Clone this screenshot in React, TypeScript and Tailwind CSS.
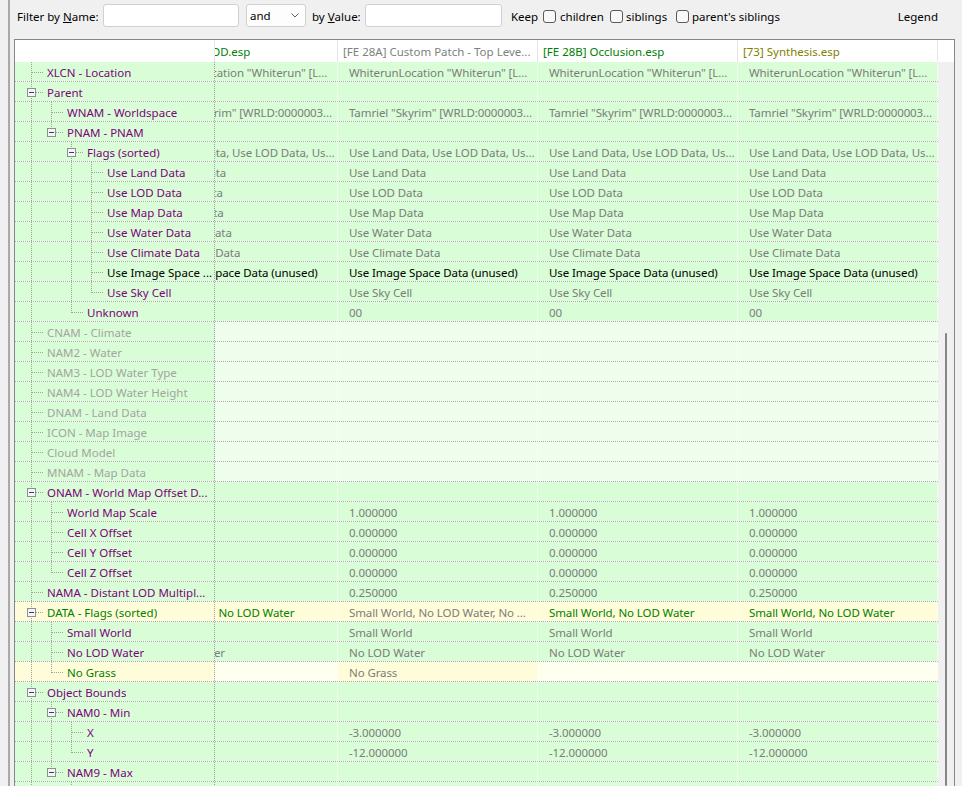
import React from "react";

type Bg = "g" | "gl" | "y" | "yl";
type Tc = "p" | "s" | "n" | "k" | "v";

const BG: Record<Bg, string> = {
  g: "bg-[#d9fdd6]",
  gl: "bg-[#eefdec]",
  y: "bg-[#fffdd9]",
  yl: "bg-[#fffff0]",
};
const TC: Record<Tc, string> = {
  p: "text-[#800080]",
  s: "text-[#a4a4a4]",
  n: "text-[#008000]",
  k: "text-black",
  v: "text-[#7c7c7c]",
};

interface Row {
  label: string;
  level: number;
  box?: boolean;
  last?: boolean;
  anc: number[];
  lc?: Tc;
  tbg?: Bg;
  v?: string[];
  vc?: Tc[];
  vbg?: Bg[];
}

const WL = 'WhiterunLocation "Whiterun" [L...';
const TS = 'Tamriel "Skyrim" [WRLD:0000003...';
const FL = "Use Land Data, Use LOD Data, Us...";
const SNL = "Small World, No LOD Water";
const all = (s: string) => [s, s, s, s];
const GL: Bg[] = ["gl", "gl", "gl", "gl"];

const rows: Row[] = [
  { label: "XLCN - Location", level: 1, anc: [], v: all(WL) },
  { label: "Parent", level: 1, box: true, anc: [] },
  { label: "WNAM - Worldspace", level: 2, anc: [1], v: all(TS) },
  { label: "PNAM - PNAM", level: 2, box: true, last: true, anc: [1] },
  { label: "Flags (sorted)", level: 3, box: true, anc: [1], v: all(FL) },
  { label: "Use Land Data", level: 4, anc: [1, 3], v: all("Use Land Data") },
  { label: "Use LOD Data", level: 4, anc: [1, 3], v: all("Use LOD Data") },
  { label: "Use Map Data", level: 4, anc: [1, 3], v: all("Use Map Data") },
  { label: "Use Water Data", level: 4, anc: [1, 3], v: all("Use Water Data") },
  { label: "Use Climate Data", level: 4, anc: [1, 3], v: all("Use Climate Data") },
  {
    label: "Use Image Space ...",
    level: 4,
    anc: [1, 3],
    lc: "k",
    v: all("Use Image Space Data (unused)"),
    vc: ["k", "k", "k", "k"],
  },
  { label: "Use Sky Cell", level: 4, last: true, anc: [1, 3], v: all("Use Sky Cell") },
  { label: "Unknown", level: 3, last: true, anc: [1], v: ["", "00", "00", "00"] },
  { label: "CNAM - Climate", level: 1, anc: [], lc: "s", vbg: GL },
  { label: "NAM2 - Water", level: 1, anc: [], lc: "s", vbg: GL },
  { label: "NAM3 - LOD Water Type", level: 1, anc: [], lc: "s", vbg: GL },
  { label: "NAM4 - LOD Water Height", level: 1, anc: [], lc: "s", vbg: GL },
  { label: "DNAM - Land Data", level: 1, anc: [], lc: "s", vbg: GL },
  { label: "ICON - Map Image", level: 1, anc: [], lc: "s", vbg: GL },
  { label: "Cloud Model", level: 1, anc: [], lc: "s", vbg: GL },
  { label: "MNAM - Map Data", level: 1, anc: [], lc: "s", vbg: GL },
  { label: "ONAM - World Map Offset D...", level: 1, box: true, anc: [] },
  { label: "World Map Scale", level: 2, anc: [1], v: ["", "1.000000", "1.000000", "1.000000"] },
  { label: "Cell X Offset", level: 2, anc: [1], v: ["", "0.000000", "0.000000", "0.000000"] },
  { label: "Cell Y Offset", level: 2, anc: [1], v: ["", "0.000000", "0.000000", "0.000000"] },
  { label: "Cell Z Offset", level: 2, last: true, anc: [1], v: ["", "0.000000", "0.000000", "0.000000"] },
  { label: "NAMA - Distant LOD Multipl...", level: 1, anc: [], v: ["", "0.250000", "0.250000", "0.250000"] },
  {
    label: "DATA - Flags (sorted)",
    level: 1,
    box: true,
    anc: [],
    lc: "n",
    tbg: "y",
    v: [SNL, "Small World, No LOD Water, No ...", SNL, SNL],
    vc: ["n", "v", "n", "n"],
    vbg: ["y", "y", "y", "y"],
  },
  { label: "Small World", level: 2, anc: [1], v: ["", "Small World", "Small World", "Small World"] },
  { label: "No LOD Water", level: 2, anc: [1], v: all("No LOD Water") },
  {
    label: "No Grass",
    level: 2,
    last: true,
    anc: [1],
    lc: "n",
    tbg: "y",
    v: ["", "No Grass", "", ""],
    vbg: ["yl", "y", "yl", "yl"],
  },
  { label: "Object Bounds", level: 1, box: true, anc: [] },
  { label: "NAM0 - Min", level: 2, box: true, anc: [1] },
  { label: "X", level: 3, anc: [1, 2], v: ["", "-3.000000", "-3.000000", "-3.000000"] },
  { label: "Y", level: 3, last: true, anc: [1, 2], v: ["", "-12.000000", "-12.000000", "-12.000000"] },
  { label: "NAM9 - Max", level: 2, box: true, last: true, anc: [1] },
  { label: "X", level: 3, anc: [1], v: ["", "", "", ""] },
];

const gx = (lv: number) => 16 + 20 * (lv - 1);

function Guides({ r }: { r: Row }) {
  const w = 32 + 20 * (r.level - 1);
  const xl = gx(r.level);
  return (
    <svg width={w} height={19} className="block shrink-0">
      {r.anc.map((a) => (
        <line
          key={a}
          x1={gx(a) + 0.5}
          y1={0}
          x2={gx(a) + 0.5}
          y2={19}
          stroke="#a0a0a0"
          strokeDasharray="1 1"
        />
      ))}
      <line
        x1={xl + 0.5}
        y1={0}
        x2={xl + 0.5}
        y2={r.last ? 11 : 19}
        stroke="#a0a0a0"
        strokeDasharray="1 1"
      />
      <line
        x1={r.box ? xl + 5 : xl + 1}
        y1={10.5}
        x2={xl + 13}
        y2={10.5}
        stroke="#a0a0a0"
        strokeDasharray="1 1"
      />
      {r.box && (
        <g>
          <rect x={xl - 3.5} y={6.5} width={8} height={8} fill="#f5f5f5" stroke="#8f8f8f" />
          <line x1={xl - 2} y1={10.5} x2={xl + 3} y2={10.5} stroke="#23407c" />
        </g>
      )}
    </svg>
  );
}

function GridRow({ r }: { r: Row }) {
  const v = r.v ?? ["", "", "", ""];
  const vc = r.vc ?? ["v", "v", "v", "v"];
  const vbg = r.vbg ?? ["g", "g", "g", "g"];
  return (
    <div className="flex h-[20px] bg-white border-b border-dotted border-[#a8a8a8]">
      <div
        className={`flex w-[200px] h-[19px] shrink-0 overflow-hidden border-r border-dotted border-[#a0a0a0] ${BG[r.tbg ?? "g"]}`}
      >
        <Guides r={r} />
        <span className={`whitespace-nowrap overflow-hidden leading-[19px] pt-[1px] ${TC[r.lc ?? "p"]}`}>
          {r.label}
        </span>
      </div>
      <div className={`w-[123px] h-[19px] shrink-0 overflow-hidden border-r border-dotted border-white ${BG[vbg[0]]}`}>
        <div
          className={`ml-[-77px] w-[200px] pl-[11px] pt-[1px] whitespace-nowrap leading-[19px] tracking-[-0.1px] ${TC[vc[0]]}`}
        >
          {v[0]}
        </div>
      </div>
      {[1, 2, 3].map((i) => (
        <div
          key={i}
          className={`w-[200px] h-[19px] shrink-0 overflow-hidden whitespace-nowrap pl-[11px] pt-[1px] leading-[19px] tracking-[-0.1px] border-r border-dotted border-white ${BG[vbg[i]]} ${TC[vc[i]]}`}
        >
          {v[i]}
        </div>
      ))}
    </div>
  );
}

function CheckBox() {
  return <div className="w-[13px] h-[13px] rounded-[3px] border border-[#5b5b5b] bg-[#f8f8f8] shrink-0" />;
}

export default function App() {
  return (
    <div className="w-[962px] h-[786px] flex overflow-hidden bg-[#f0f0f0] text-[11.5px] text-black font-['Noto_Sans',sans-serif]">
      <div className="w-[10px] h-full flex shrink-0">
        <div className="w-[8px] h-full bg-[#f0f0f0]" />
        <div className="w-[2px] h-full bg-[#a9a9a9]" />
      </div>
      <div className="flex-1 min-w-0 flex flex-col">
        <div className="h-[39px] shrink-0 flex items-start pt-[4px] pl-[7px] pr-[24px]">
          <span className="w-[80px] h-[23px] pt-[2px] flex items-center whitespace-nowrap">
            Filter by&nbsp;<span className="underline">N</span>ame:
          </span>
          <div className="ml-[6px] w-[136px] h-[23px] rounded-[3px] border border-[#d0d0d0] bg-white" />
          <div className="ml-[7px] w-[60px] h-[23px] rounded-[3px] border border-[#d0d0d0] bg-[#fdfdfd] flex items-center pl-[3px]">
            <span className="pt-[1px]">and</span>
            <svg width="8" height="5" className="ml-auto mr-[6px]">
              <polyline points="0.5,0.5 4,4 7.5,0.5" fill="none" stroke="#606060" strokeWidth="1" />
            </svg>
          </div>
          <span className="ml-[6px] w-[47px] h-[23px] pt-[2px] flex items-center whitespace-nowrap">
            by&nbsp;<span className="underline">V</span>alue:
          </span>
          <div className="ml-[6px] w-[137px] h-[23px] rounded-[3px] border border-[#d0d0d0] bg-white" />
          <span className="ml-[9px] w-[27px] h-[23px] pt-[2px] flex items-center">Keep</span>
          <div className="ml-[5px] h-[23px] pt-[2px] flex items-center">
            <CheckBox />
          </div>
          <span className="ml-[4px] w-[42px] h-[23px] pt-[2px] flex items-center">children</span>
          <div className="ml-[8px] h-[23px] pt-[2px] flex items-center">
            <CheckBox />
          </div>
          <span className="ml-[3px] w-[40px] h-[23px] pt-[2px] flex items-center">siblings</span>
          <div className="ml-[10px] h-[23px] pt-[2px] flex items-center">
            <CheckBox />
          </div>
          <span className="ml-[3px] h-[23px] pt-[2px] flex items-center whitespace-nowrap">parent's siblings</span>
          <span className="ml-auto h-[23px] pt-[2px] flex items-center">Legend</span>
        </div>
        <div className="ml-[4px] w-[941px] flex-1 min-h-0 flex flex-col overflow-hidden bg-white border-t border-l border-r border-[#828790]">
          <div className="flex h-[22px] shrink-0 bg-white leading-[22px] whitespace-nowrap">
            <div className="w-[200px] shrink-0 border-r border-[#e5e5e5]" />
            <div className="w-[123px] shrink-0 overflow-hidden border-r border-[#e5e5e5]">
              <div className="ml-[-77px] w-[200px] pl-[5px] pt-[1px] text-[#008000]">[72] DynDOLOD.esp</div>
            </div>
            <div className="w-[200px] shrink-0 overflow-hidden pl-[5px] pt-[1px] border-r border-[#e5e5e5] text-[#808080]">
              [FE 28A] Custom Patch - Top Leve...
            </div>
            <div className="w-[200px] shrink-0 overflow-hidden pl-[5px] pt-[1px] border-r border-[#e5e5e5] text-[#008000]">
              [FE 28B] Occlusion.esp
            </div>
            <div className="w-[200px] shrink-0 overflow-hidden pl-[5px] pt-[1px] border-r border-[#e5e5e5] text-[#808000]">
              [73] Synthesis.esp
            </div>
            <div className="w-[16px] shrink-0" />
          </div>
          <div className="flex flex-1 min-h-0">
            <div className="w-[923px] shrink-0 overflow-hidden">
              {rows.map((r, i) => (
                <GridRow key={i} r={r} />
              ))}
            </div>
            <div className="w-[16px] shrink-0 bg-[#f0f0f0] pl-[7px] pt-[271px]">
              <div className="w-[2px] h-full rounded-full bg-[#868686]" />
            </div>
          </div>
        </div>
      </div>
    </div>
  );
}
